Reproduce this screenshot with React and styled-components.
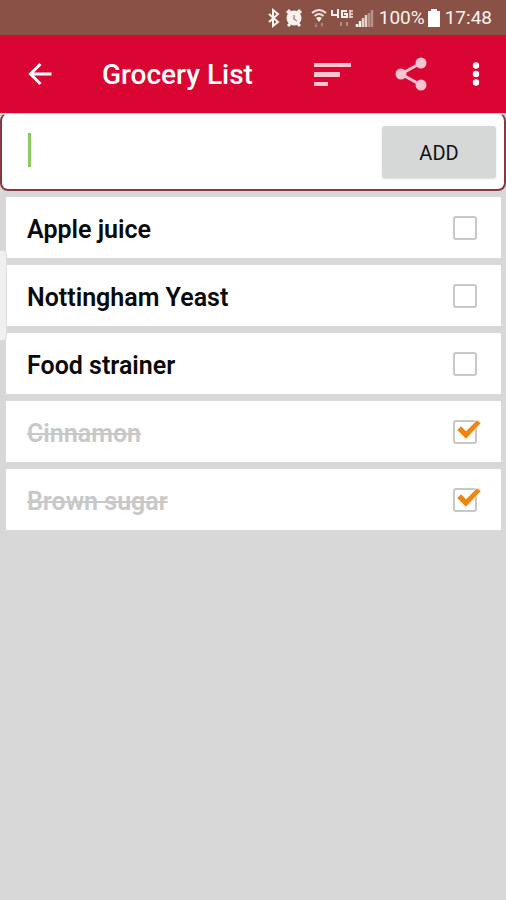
import React, { useState } from 'react';
import styled, { createGlobalStyle } from 'styled-components';

const GlobalStyle = createGlobalStyle`
  * {
    box-sizing: border-box;
  }

  body {
    margin: 0;
    background: #d8d8d8;
    font-family: Roboto, 'Liberation Sans', sans-serif;
  }
`;

const AppContainer = styled.div`
  position: relative;
  min-height: 100vh;
  background: #d8d8d8;
`;

const StatusBar = styled.div`
  display: flex;
  justify-content: flex-end;
  align-items: center;
  height: 35px;
  padding: 0 14px 0 0;
  background: #8a5146;
  color: #fbf3f0;
  font-size: 19px;
  line-height: 20px;
`;

const StatusIcons = styled.svg`
  width: 108px;
  height: 24px;
  margin-right: 3px;
`;

const BatteryIcon = styled.svg`
  width: 12px;
  height: 18px;
  margin: 0 5px 0 3px;
`;

const Toolbar = styled.header`
  display: flex;
  align-items: center;
  height: 78px;
  padding: 0 10px 0 20px;
  background: #d90532;
`;

const Title = styled.h1`
  flex: 1;
  margin: 0 0 0 42px;
  padding-top: 2px;
  color: #fff;
  font-size: 28px;
  line-height: 32px;
  font-weight: 500;
`;

const IconButton = styled.button`
  display: flex;
  justify-content: center;
  align-items: center;
  width: 40px;
  height: 48px;
  margin-left: ${(props) => props.$gap || 0}px;
  padding: 0;
  border: 0;
  background: transparent;
  color: ${(props) => (props.$soft ? '#fdc3cf' : '#fff')};
`;

const AddForm = styled.form`
  display: flex;
  align-items: center;
  height: 78px;
  padding: 0 8px 0 24px;
  border: 2px solid #8a3740;
  border-top: 1px solid #d5d0c8;
  border-radius: 8px;
  background: #fff;
`;

const InputWrap = styled.label`
  display: flex;
  flex: 1;
  align-items: center;
  margin-right: 16px;

  &::before {
    content: '';
    width: 3px;
    height: 34px;
    margin: 0 0 4px 2px;
    background: #8bc962;
  }
`;

const ItemInput = styled.input`
  flex: 1;
  min-width: 0;
  height: 48px;
  padding: 0 4px;
  border: 0;
  outline: none;
  background: transparent;
  color: #000;
  font: 500 24px Roboto, sans-serif;
`;

const AddButton = styled.button`
  width: 114px;
  height: 52px;
  padding: 2px 0 0;
  border: 0;
  border-radius: 3px;
  background: #d6d8d7;
  box-shadow: 0 1px 2px rgba(0, 0, 0, 0.15);
  color: #111;
  font: 400 20px Roboto, sans-serif;
`;

const List = styled.ul`
  display: flex;
  flex-direction: column;
  gap: 7px;
  margin: 0;
  padding: 6px 5px 0 6px;
  list-style: none;
`;

const Row = styled.li`
  display: flex;
  justify-content: space-between;
  align-items: center;
  height: 61px;
  padding: 0 24px 0 21px;
  background: #fff;
`;

const ItemName = styled.label`
  flex: 1;
  padding-top: 4px;
  color: ${(props) => (props.$done ? '#c8c8c8' : '#0a0a0a')};
  font-size: 25px;
  line-height: 30px;
  font-weight: 600;
  text-decoration: ${(props) => (props.$done ? 'line-through' : 'none')};
  text-decoration-thickness: 2px;
`;

const CheckWrap = styled.span`
  position: relative;
  display: flex;
`;

const Checkbox = styled.input`
  appearance: none;
  width: 24px;
  height: 24px;
  margin: 0;
  border: 2px solid #c8c8c8;
  border-radius: 3px;
  background: #fff;
`;

const CheckMark = styled.svg`
  position: absolute;
  top: -1px;
  left: 2px;
  width: 28px;
  height: 24px;
  pointer-events: none;
`;

const EdgeHandle = styled.div`
  position: absolute;
  top: 250px;
  left: 0;
  width: 7px;
  height: 91px;
  border: 1px solid #dedede;
  border-left: 0;
  border-radius: 0 5px 5px 0;
  background: #f0f0f0;
`;

const initialItems = [
  { id: 'apple-juice', name: 'Apple juice', done: false },
  { id: 'yeast', name: 'Nottingham Yeast', done: false },
  { id: 'strainer', name: 'Food strainer', done: false },
  { id: 'cinnamon', name: 'Cinnamon', done: true },
  { id: 'brown-sugar', name: 'Brown sugar', done: true },
];

function SystemIcons() {
  return (
    <StatusIcons viewBox="0 0 108 24" fill="none" aria-hidden="true">
      {/* bluetooth */}
      <path d="M1 8l9 8-5 4V4l5 4-9 8" stroke="#fbf3f0" strokeWidth="2" />
      {/* alarm */}
      <circle cx="26" cy="12" r="7.5" fill="#fbf3f0" />
      <path d="M19 7l3-3M33 7l-3-3M20 20l2-2M32 20l-2-2" stroke="#fbf3f0" strokeWidth="3" />
      <path d="M26 9v4l3 2" stroke="#b98b82" strokeWidth="1.5" />
      {/* wifi */}
      <path d="M44 7q7-6 14 0M46.500 10q4.500-4 9 0" stroke="#f3dfda" strokeWidth="2" />
      <path d="M48 12q3-2 6 0l-3 4z" fill="#fbf3f0" />
      <path d="M48 17v4M47 19l1 2 1-2M54 21v-4M53 19l1-2 1 2" stroke="#b98b82" strokeWidth="1" />
      {/* 4G signal */}
      <path d="M64 4v5h7M70 3v9" stroke="#fbf3f0" strokeWidth="2" />
      <path d="M79 5h-5v6h5V8h-3" stroke="#fbf3f0" strokeWidth="2" />
      <path d="M82 4v8M82 5h3M82 8h3M82 11h3" stroke="#f3dfda" strokeWidth="1.5" />
      <path d="M73 16v4M79 16v4" stroke="#b98b82" strokeWidth="2" />
      <path d="M89 18v3M92 15v6" stroke="#fbf3f0" strokeWidth="2.5" />
      <path d="M95 12v9M98 9v12" stroke="#e6d3ce" strokeWidth="2.5" />
      <path d="M101 7v14M104 4v17" stroke="#b79288" strokeWidth="2.5" />
    </StatusIcons>
  );
}

function App() {
  const [items, setItems] = useState(initialItems);
  const [text, setText] = useState('');

  const toggle = (id) => {
    setItems(items.map((item) => (item.id === id ? { ...item, done: !item.done } : item)));
  };

  const handleSubmit = (e) => {
    e.preventDefault();
    if (!text.trim()) return;
    setItems([{ id: `item-${items.length}`, name: text, done: false }, ...items]);
    setText('');
  };

  return (
    <AppContainer>
      <GlobalStyle />
      <StatusBar>
        <SystemIcons />
        <span>100%</span>
        <BatteryIcon viewBox="0 0 12 18" aria-hidden="true">
          <path d="M3 0h6v2h3v16H0V2h3z" fill="#fff" />
        </BatteryIcon>
        <span>17:48</span>
      </StatusBar>
      <Toolbar>
        <IconButton type="button" aria-label="Back">
          <svg width="24" height="24" viewBox="0 0 24 24" fill="none" stroke="currentColor" strokeWidth="3">
            <path d="M23.500 12H3M12.500 2L2.500 12l10 10" />
          </svg>
        </IconButton>
        <Title>Grocery List</Title>
        <IconButton type="button" aria-label="Sort" $soft>
          <svg width="37" height="26" viewBox="0 0 37 26" fill="currentColor">
            <path d="M0 2h37v4H0zM0 11h26v5H0zM0 21h14v4H0z" />
          </svg>
        </IconButton>
        <IconButton type="button" aria-label="Share" $soft $gap={39}>
          <svg width="32" height="34" viewBox="0 0 32 34" fill="currentColor">
            <path d="M26 6L6 17l20 11" fill="none" stroke="currentColor" strokeWidth="3" />
            <circle cx="26" cy="6" r="5.500" />
            <circle cx="6" cy="17" r="5.500" />
            <circle cx="26" cy="28" r="5.500" />
          </svg>
        </IconButton>
        <IconButton type="button" aria-label="More options" $gap={25}>
          <svg width="8" height="24" viewBox="0 0 8 24" fill="currentColor">
            <circle cx="4" cy="3.500" r="3.200" />
            <circle cx="4" cy="12" r="3.200" />
            <circle cx="4" cy="20.500" r="3.200" />
          </svg>
        </IconButton>
      </Toolbar>
      <AddForm onSubmit={handleSubmit}>
        <InputWrap>
          <ItemInput aria-label="New item" value={text} onChange={(e) => setText(e.target.value)} />
        </InputWrap>
        <AddButton type="submit">ADD</AddButton>
      </AddForm>
      <List>
        {items.map((item) => (
          <Row key={item.id}>
            <ItemName htmlFor={item.id} $done={item.done}>
              {item.name}
            </ItemName>
            <CheckWrap>
              <Checkbox
                type="checkbox"
                id={item.id}
                checked={item.done}
                onChange={() => toggle(item.id)}
              />
              {item.done && (
                <CheckMark viewBox="0 0 28 24" aria-hidden="true">
                  <path d="M2 11l4-4 5 5L22 1l4 3-15 16z" fill="#ee8512" stroke="#fde3c0" strokeWidth="1" />
                </CheckMark>
              )}
            </CheckWrap>
          </Row>
        ))}
      </List>
      <EdgeHandle />
    </AppContainer>
  );
}

export default App;
